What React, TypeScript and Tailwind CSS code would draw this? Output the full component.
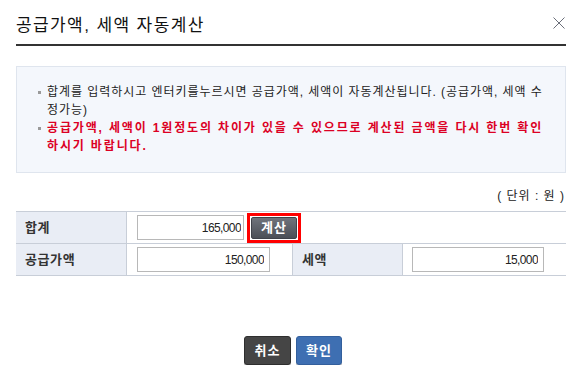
import { useState } from 'react'

const font = "font-['Liberation_Sans','Noto_Sans_CJK_KR',sans-serif]"

export default function App() {
  const [total, setTotal] = useState('165,000')
  const [supply, setSupply] = useState('150,000')
  const [tax, setTax] = useState('15,000')

  return (
    <div className={`${font} w-[577px] bg-white pl-4 pr-[11px] text-[#222]`}>
      {/* Header */}
      <div className="flex h-[46px] items-center justify-between border-b-2 border-[#333] pt-[6px]">
        <h1 className="text-[17px] leading-none tracking-[1.4px] text-[#111]">공급가액, 세액 자동계산</h1>
        <button className="mr-px mb-[4px] cursor-pointer">
          <svg width="12" height="12" viewBox="0 0 12 12" className="block">
            <path d="M0.5 0.5 L11.5 11.5 M11.5 0.5 L0.5 11.5" stroke="#6b6f7a" strokeWidth="1" fill="none" />
          </svg>
        </button>
      </div>

      {/* Notice */}
      <div className="mt-5 border border-[#dfe5ee] bg-[#f4f7fc] pl-[21px] pt-[16px] pb-[17px] text-[12px] leading-[18px]">
        <div className="flex">
          <span className="mt-[8px] mr-[6px] h-[3px] w-[3px] shrink-0 bg-[#9a9a9a]" />
          <p className="whitespace-nowrap tracking-[0.95px] text-[#222]">
            합계를 입력하시고 엔터키를누르시면 공급가액, 세액이 자동계산됩니다. (공급가액, 세액 수
            <br />
            정가능)
          </p>
        </div>
        <div className="flex">
          <span className="mt-[8px] mr-[6px] h-[3px] w-[3px] shrink-0 bg-[#9a9a9a]" />
          <p className="whitespace-nowrap font-bold tracking-[1.85px] text-[#dc0024]">
            공급가액, 세액이 1원정도의 차이가 있을 수 있으므로 계산된 금액을 다시 한번 확인
            <br />
            하시기 바랍니다.
          </p>
        </div>
      </div>

      <p className="mt-[14px] mb-[6px] pr-px text-right text-[12px] leading-[18px] tracking-[1px] text-[#222]">( 단위 : 원 )</p>

      {/* Table */}
      <div className="grid grid-cols-[111px_166px_110px_1fr] border-t border-[#c8ced8] text-[12px]">
        <div className="flex h-[32px] items-center border-r border-b border-[#c8ced8] bg-[#e9edf5] pl-[9px] text-[13px] font-bold tracking-[0.6px] text-[#333]">
          합계
        </div>
        <div className="col-span-3 flex h-[32px] items-center border-b border-[#c8ced8] pl-[10px]">
          <input
            value={total}
            onChange={e => setTotal(e.target.value)}
            className="h-[25px] w-[107px] border border-[#b8b8b8] bg-white pr-[2px] text-right text-[12px] tracking-[-0.6px] text-[#222] outline-none"
          />
          <span className="ml-[3px] inline-flex border-[3px] border-[#ff0000] p-px">
            <button className="h-[22px] w-[46px] cursor-pointer rounded-[2px] border border-[#3f424a] bg-gradient-to-b from-[#6f737b] to-[#4b4f57] text-[13px] font-bold leading-none tracking-[1px] text-white">
              계산
            </button>
          </span>
        </div>

        <div className="flex h-[32px] items-center border-r border-b border-[#c8ced8] bg-[#e9edf5] pl-[9px] text-[13px] font-bold tracking-[0.6px] text-[#333]">
          공급가액
        </div>
        <div className="flex h-[32px] items-center border-r border-b border-[#c8ced8] pl-[10px]">
          <input
            value={supply}
            onChange={e => setSupply(e.target.value)}
            className="h-[25px] w-[133px] border border-[#b8b8b8] bg-white pr-[5px] text-right text-[12px] tracking-[-0.6px] text-[#222] outline-none"
          />
        </div>
        <div className="flex h-[32px] items-center border-r border-b border-[#c8ced8] bg-[#e9edf5] pl-[9px] text-[13px] font-bold tracking-[0.6px] text-[#333]">
          세액
        </div>
        <div className="flex h-[32px] items-center border-b border-[#c8ced8] pl-[9px]">
          <input
            value={tax}
            onChange={e => setTax(e.target.value)}
            className="h-[25px] w-[132px] border border-[#b8b8b8] bg-white pr-[5px] text-right text-[12px] tracking-[-0.6px] text-[#222] outline-none"
          />
        </div>
      </div>

      {/* Actions */}
      <div className="mt-[60px] flex justify-center gap-[5px] pl-[4px]">
        <button className="h-[29px] w-[47px] cursor-pointer rounded-[3px] border border-[#2e2e2e] bg-[#454545] text-[13px] font-bold tracking-[1px] text-white shadow-[0_2px_0_#c9c9c9]">
          취소
        </button>
        <button className="h-[29px] w-[46px] cursor-pointer rounded-[3px] border border-[#335f9c] bg-[#3e6fb2] text-[13px] font-bold tracking-[1px] text-white shadow-[0_2px_0_#c9c9c9]">
          확인
        </button>
      </div>
    </div>
  )
}
